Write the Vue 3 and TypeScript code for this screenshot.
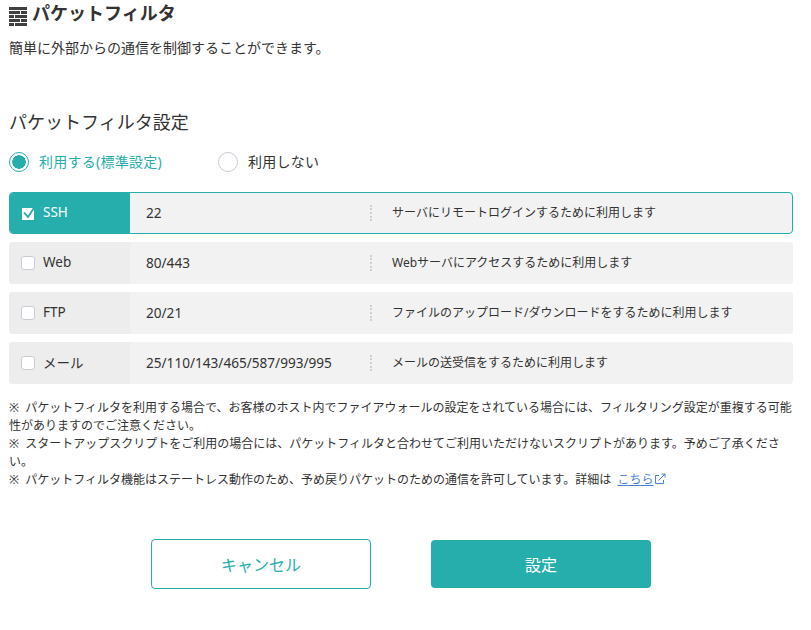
<script setup lang="ts">
interface FilterRow {
  name: string
  ports: string
  desc: string
  checked: boolean
}

const rows: FilterRow[] = [
  { name: 'SSH', ports: '22', desc: 'サーバにリモートログインするために利用します', checked: true },
  { name: 'Web', ports: '80/443', desc: 'Webサーバにアクセスするために利用します', checked: false },
  { name: 'FTP', ports: '20/21', desc: 'ファイルのアップロード/ダウンロードをするために利用します', checked: false },
  { name: 'メール', ports: '25/110/143/465/587/993/995', desc: 'メールの送受信をするために利用します', checked: false },
]
</script>

<template>
  <div class="page">
    <h1 class="title">
      <svg class="title-icon" width="18" height="19" viewBox="0 0 18 19" fill="#404040">
        <path d="M0 0h18v3H0z" />
        <path d="M0 4h11v3H0zM12 4h6v3h-6z" />
        <path d="M0 8h5v3H0zM6 8h12v3H6z" />
        <path d="M0 12h11v3H0zM12 12h6v3h-6z" />
        <path d="M0 16h5v3H0zM6 16h12v3H6z" />
      </svg>
      パケットフィルタ
    </h1>
    <p class="lead">簡単に外部からの通信を制御することができます。</p>

    <h2 class="section">パケットフィルタ設定</h2>

    <div class="radios">
      <label class="radio on"><span class="radio-mark"></span>利用する(標準設定)</label>
      <label class="radio"><span class="radio-mark"></span>利用しない</label>
    </div>

    <ul class="rows">
      <li v-for="row in rows" :key="row.name" class="row" :class="{ active: row.checked }">
        <div class="row-name">
          <span class="check">
            <svg v-if="row.checked" width="14" height="14" viewBox="0 0 14 14">
              <path d="M1 2h12v12H1z" fill="#fff" />
              <path d="M3 6.5l4 4.5L13.5 1" fill="none" stroke="#26aeac" stroke-width="1.8" />
            </svg>
          </span>
          <span>{{ row.name }}</span>
        </div>
        <div class="row-ports"><span>{{ row.ports }}</span></div>
        <div class="row-desc"><span>{{ row.desc }}</span></div>
      </li>
    </ul>

    <div class="notes">
      <p>※ パケットフィルタを利用する場合で、お客様のホスト内でファイアウォールの設定をされている場合には、フィルタリング設定が重複する可能性がありますのでご注意ください。</p>
      <p>※ スタートアップスクリプトをご利用の場合には、パケットフィルタと合わせてご利用いただけないスクリプトがあります。予めご了承ください。</p>
      <p>
        ※ パケットフィルタ機能はステートレス動作のため、予め戻りパケットのための通信を許可しています。詳細は
        <a class="link" href="#">こちら</a>
        <svg class="ext" width="12" height="12" viewBox="0 0 12 12" fill="none" stroke="#4a86d8" stroke-width="1">
          <path d="M5 2.5H1.5v8h8V7" />
          <path d="M4.5 7.5L11 1M7.5 1H11v3.5" />
        </svg>
      </p>
    </div>

    <div class="actions">
      <button class="btn btn-cancel" type="button">キャンセル</button>
      <button class="btn btn-submit" type="button">設定</button>
    </div>
  </div>
</template>

<style scoped>
.page {
  width: 811px;
  height: 630px;
  box-sizing: border-box;
  padding: 0 18px 0 9px;
  overflow: hidden;
  color: #333;
  font-family: 'Noto Sans', 'Noto Sans CJK JP', sans-serif;
}

.title {
  display: flex;
  align-items: center;
  gap: 5px;
  margin: 0;
  height: 26px;
  font-size: 18px;
  font-weight: 700;
  line-height: 26px;
}

.title-icon {
  margin-top: 6px;
}

.lead {
  margin: 9px 0 0;
  font-size: 14px;
  line-height: 26px;
}

.section {
  margin: 48px 0 0;
  font-size: 18px;
  font-weight: 400;
  line-height: 26px;
}

.radios {
  display: flex;
  gap: 56px;
  margin-top: 17px;
}

.radio {
  display: flex;
  align-items: center;
  gap: 10px;
  font-size: 14px;
  line-height: 20px;
  letter-spacing: 0.25px;
}

.radio.on {
  color: #26aeac;
}

.radio-mark {
  width: 20px;
  height: 20px;
  box-sizing: border-box;
  border: 1px solid #c8ccd4;
  border-radius: 50%;
  background: #fff;
}

.radio.on .radio-mark {
  border-color: #26aeac;
  background: radial-gradient(circle, #26aeac 0 6.5px, #fff 7px);
}

.rows {
  list-style: none;
  margin: 20px 0 0;
  padding: 0;
  display: flex;
  flex-direction: column;
  gap: 8px;
}

.row {
  display: flex;
  align-items: center;
  height: 42px;
  box-sizing: border-box;
  border-radius: 4px;
  background: #f2f2f2;
  font-size: 12px;
  overflow: hidden;
}

.row.active {
  border: 1px solid #26aeac;
}

.row-name {
  display: flex;
  align-items: center;
  gap: 8px;
  flex: none;
  width: 121px;
  height: 100%;
  box-sizing: border-box;
  padding-left: 12px;
  background: #ededed;
  font-size: 13.5px;
}

.row-name span:last-child,
.row-ports span,
.row-desc span {
  display: block;
  margin-top: -2px;
}

.row.active .row-name {
  margin-left: -1px;
  background: #26aeac;
  color: #fff;
}

.check {
  display: flex;
  align-items: center;
  justify-content: center;
  width: 14px;
  height: 14px;
  box-sizing: border-box;
  border: 1px solid #c8ccd4;
  border-radius: 3px;
  background: #fff;
}

.row.active .check {
  border: 0;
  background: none;
}

.row-ports {
  flex: none;
  width: 240px;
  padding-left: 16px;
  box-sizing: border-box;
  font-size: 13.6px;
}

.row-desc {
  position: relative;
  padding-left: 22px;
}

.row-desc::before {
  content: '';
  position: absolute;
  left: 0;
  top: 0;
  height: 16px;
  border-left: 2px dotted #d0d0d0;
}

.notes {
  margin-top: 15px;
  font-size: 12px;
  line-height: 18px;
  word-spacing: 3px;
}

.notes p {
  margin: 0;
}

.link {
  color: #4a86d8;
}

.ext {
  vertical-align: -1px;
}

.actions {
  display: flex;
  justify-content: center;
  align-items: center;
  gap: 60px;
  margin-top: 50px;
}

.btn {
  width: 220px;
  border-radius: 4px;
  font-family: inherit;
  font-size: 16px;
}

.btn-cancel {
  height: 50px;
  border: 1px solid #26aeac;
  background: #fff;
  color: #26aeac;
}

.btn-submit {
  height: 48px;
  border: 0;
  background: #26aeac;
  color: #fff;
}
</style>
